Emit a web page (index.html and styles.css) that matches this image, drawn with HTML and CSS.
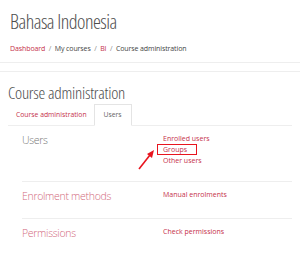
FILE: index.html
```html
<!DOCTYPE html>
<html lang="en">
<head>
    <meta charset="UTF-8">
    <title>Course administration</title>
    <link rel="stylesheet" href="styles.css">
</head>
<body>
    <header class="page-header">
        <h1>Bahasa Indonesia</h1>
        <nav class="breadcrumb">
            <a href="#">Dashboard</a><span class="sep">/</span><span>My courses</span><span class="sep">/</span><a href="#">BI</a><span class="sep">/</span><span class="current">Course administration</span>
        </nav>
    </header>
    <div class="band"></div>

    <main class="content">
        <h2>Course administration</h2>
        <ul class="tabs">
            <li><a href="#">Course administration</a></li>
            <li class="active"><span>Users</span></li>
        </ul>

        <div class="section">
            <div class="section-title plain">Users</div>
            <ul class="links">
                <li><a href="#">Enrolled users</a></li>
                <li><a href="#" class="marked">Groups</a></li>
                <li><a href="#">Other users</a></li>
            </ul>
            <svg class="arrow" width="22" height="22" viewBox="0 0 22 22">
                <line x1="2" y1="20" x2="13" y2="6" stroke="#e8141e" stroke-width="1.6" />
                <polygon points="17,1 10,5 15,9" fill="#e8141e" />
            </svg>
        </div>
        <div class="section">
            <div class="section-title">Enrolment methods</div>
            <ul class="links">
                <li><a href="#">Manual enrolments</a></li>
            </ul>
        </div>
        <div class="section last">
            <div class="section-title">Permissions</div>
            <ul class="links">
                <li><a href="#">Check permissions</a></li>
            </ul>
        </div>
    </main>
</body>
</html>
```

FILE: styles.css
```css
body {
    margin: 0;
    font-family: "Open Sans", Arial, sans-serif;
    background-color: #fff;
    color: #555;
}

a {
    color: #c5304a;
    text-decoration: none;
}

.page-header {
    padding: 9px 10px 0;
    height: 54px;
    box-sizing: border-box;
}

h1 {
    margin: 0;
    font-size: 20px;
    font-weight: 350;
    font-stretch: 87.5%;
    letter-spacing: -0.5px;
    color: #4d4d4d;
    line-height: 26px;
}

.breadcrumb {
    margin-top: 8px;
    font-size: 7px;
    letter-spacing: -0.1px;
    color: #444;
    line-height: 12px;
}

.breadcrumb .sep {
    color: #888;
    margin: 0 3.5px;
}

.band {
    height: 8px;
    border-top: 1px solid #eee;
    border-bottom: 1px solid #eee;
    margin-top: 8px;
}

.content {
    padding: 0 8px;
}

h2 {
    margin: 10px 0 0;
    font-size: 17px;
    font-weight: 350;
    font-stretch: 87.5%;
    letter-spacing: -0.25px;
    color: #4d4d4d;
    line-height: 22px;
}

.tabs {
    list-style: none;
    margin: 0;
    padding: 0;
    display: flex;
    border-bottom: 1px solid #eee;
    font-size: 6.8px;
    height: 21px;
    margin-top: 0;
}

.tabs li {
    padding: 6px 8px 5px;
    line-height: 10px;
}

.tabs .active {
    border: 1px solid #e4e4e4;
    border-bottom-color: #fff;
    margin-bottom: -1px;
    margin-left: -1px;
    color: #666;
    padding: 5px 9px 5px;
}

.section {
    position: relative;
    display: flex;
    margin: 0 0 0 14px;
    border-bottom: 1px solid #eee;
    padding: 7px 0 15px;
}

.section.last {
    border-bottom: none;
}

.section-title {
    width: 141px;
    font-size: 10.5px;
    letter-spacing: -0.3px;
    color: #d2697c;
    line-height: 14px;
    font-weight: 300;
}

.section-title.plain {
    color: #777;
}

.links {
    list-style: none;
    margin: 0;
    padding: 0;
    font-size: 7px;
    line-height: 11px;
}

.marked {
    border: 1.5px solid #e8141e;
    padding: 0 9px 0 5px;
    margin-left: -6px;
}

.arrow {
    position: absolute;
    left: 115px;
    top: 23px;
}
```
